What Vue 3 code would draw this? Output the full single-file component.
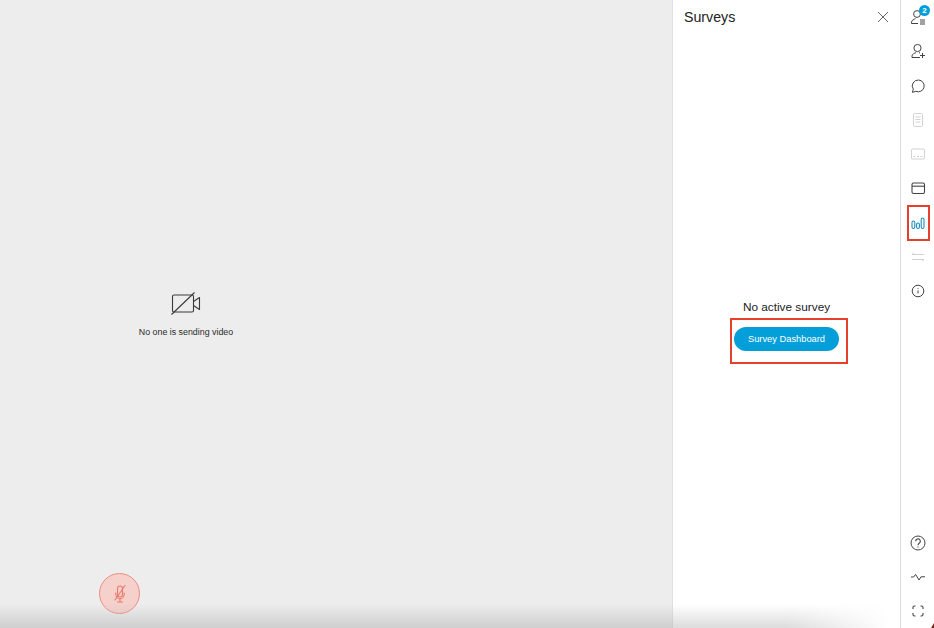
<script setup>
const topItems = [
  { id: 'participants', badge: 2 },
  { id: 'invite' },
  { id: 'chat' },
  { id: 'notes', dim: true },
  { id: 'captions', dim: true },
  { id: 'files' },
  { id: 'surveys', active: true },
  { id: 'transfer', dim: true },
  { id: 'info' }
]
const bottomItems = [{ id: 'help' }, { id: 'stats' }, { id: 'fullscreen' }]
</script>

<template>
  <div class="app">
    <main class="stage">
      <div class="video-area">
        <div class="placeholder">
          <svg class="cam" width="32" height="24" viewBox="0 0 32 24" fill="none" stroke="#3a3a3a" stroke-width="1.1">
            <rect x="1.5" y="3" width="21" height="17" rx="1.5" />
            <path d="M22.5 9.5 L28.5 5.5 V17.5 L22.5 13.5" stroke-linejoin="round" />
            <path d="M0.5 22.5 L23.5 0.5" />
          </svg>
          <span class="no-video">No one is sending video</span>
        </div>
      </div>
      <button class="mute" aria-label="Unmute">
        <svg width="14" height="20" viewBox="0 0 14 20" fill="none" stroke="#e9796b" stroke-width="1.1" stroke-linecap="round">
          <rect x="4.5" y="2" width="5" height="11" rx="2.5" />
          <path d="M2.8 9 V10.5 A4.2 4.2 0 0 0 11.2 10.5 V9" />
          <path d="M7 14.7 V18 M4.5 18 H9.5" />
          <path d="M2 16 L12 1.5" />
        </svg>
      </button>
    </main>

    <aside class="panel">
      <header class="panel-head">
        <h2 class="panel-title">Surveys</h2>
        <svg class="close" width="12" height="12" viewBox="0 0 12 12" stroke="#666" stroke-width="1" fill="none">
          <path d="M1 1 L11 11 M11 1 L1 11" />
        </svg>
      </header>
      <div class="panel-body">
        <p class="empty">No active survey</p>
        <div class="highlight-box">
          <button class="dash-btn">Survey Dashboard</button>
        </div>
      </div>
    </aside>

    <nav class="rail">
      <div class="rail-group">
        <div v-for="item in topItems" :key="item.id" class="rail-item" :class="{ dim: item.dim, active: item.active }">
          <svg width="16" height="16" viewBox="0 0 16 16" fill="none" stroke="currentColor" stroke-width="1">
            <template v-if="item.id === 'participants'">
              <circle cx="7" cy="5" r="3.4" />
              <path d="M1.5 14.5 V13.2 C1.5 11.4 3.8 10.4 5.5 9.6 M1.5 14.5 H8" />
              <path d="M10 11 H15 M10 13 H15 M10 15 H15" stroke-width="1" />
            </template>
            <template v-else-if="item.id === 'invite'">
              <circle cx="7.5" cy="5" r="3.6" />
              <path d="M2 14.5 V13 C2 11.2 4 10.4 6 9.6 M9 9.6 L10 10 M2 14.5 H10 M12.5 10 V15 M10 12.5 H15" />
            </template>
            <template v-else-if="item.id === 'chat'">
              <path d="M8.5 2 A6 5.9 0 1 1 5.8 13.3 L2.4 14.4 L3.3 11.2 A6 5.9 0 0 1 8.5 2 Z" stroke-linejoin="round" />
            </template>
            <template v-else-if="item.id === 'notes'">
              <rect x="3.5" y="1.5" width="9" height="13" rx="1" />
              <path d="M5.5 5 H10.5 M5.5 7.5 H10.5 M5.5 10 H10.5" />
            </template>
            <template v-else-if="item.id === 'captions'">
              <rect x="1.5" y="3" width="13" height="10" rx="1" />
              <path d="M3.5 10.5 H5.5 M7 10.5 H9 M10.5 10.5 H12.5" />
            </template>
            <template v-else-if="item.id === 'files'">
              <rect x="2" y="3" width="12.5" height="10.5" rx="1.5" stroke-width="1.1" />
              <path d="M2 6.2 H14.5" stroke-width="1.1" />
            </template>
            <template v-else-if="item.id === 'surveys'">
              <g stroke="#1d8fbd" stroke-width="1.1">
                <rect x="2" y="6" width="2.8" height="7.5" rx="1.4" />
                <rect x="6.6" y="8" width="2.8" height="5.5" rx="1.4" />
                <rect x="11.2" y="3" width="2.8" height="10.5" rx="1.4" />
              </g>
            </template>
            <template v-else-if="item.id === 'transfer'">
              <path d="M2 5.5 H14 M2 5.5 L4 3.8 M2 10.5 H14 M14 10.5 L12 12.2" />
            </template>
            <template v-else-if="item.id === 'info'">
              <circle cx="8" cy="8" r="5.8" />
              <path d="M8 7.4 V10.4 M8 5.2 V6" />
            </template>
          </svg>
          <span v-if="item.badge" class="badge">{{ item.badge }}</span>
        </div>
      </div>
      <div class="rail-group bottom">
        <div v-for="item in bottomItems" :key="item.id" class="rail-item">
          <svg width="16" height="16" viewBox="0 0 16 16" fill="none" stroke="currentColor" stroke-width="1">
            <template v-if="item.id === 'help'">
              <circle cx="8" cy="8" r="7" />
              <path d="M5.7 6.2 A2.3 2.3 0 1 1 9.4 8 C8.4 8.6 8 9 8 10.2 M8 11.4 V12.4" stroke-width="1.1" />
            </template>
            <template v-else-if="item.id === 'stats'">
              <path d="M1 8 H3.6 L5.6 5.4 L9 11 L11 7.8 H15" stroke-linejoin="round" />
            </template>
            <template v-else>
              <path d="M3 6 V4.5 A1.5 1.5 0 0 1 4.5 3 H5.5 M10.5 3 H11.5 A1.5 1.5 0 0 1 13 4.5 V6 M13 10 V11.5 A1.5 1.5 0 0 1 11.5 13 H10.5 M5.5 13 H4.5 A1.5 1.5 0 0 1 3 11.5 V10" stroke-width="1.1" />
            </template>
          </svg>
        </div>
      </div>
    </nav>

    <div class="bottom-fade"></div>
    <div class="panel-fade"></div>
    <div class="corner"></div>
  </div>
</template>

<style>
html, body { margin: 0; background: #fff; overflow: hidden; }
</style>

<style scoped>
.app {
  position: relative;
  display: flex;
  width: 934px;
  height: 628px;
  overflow: hidden;
  background: #fff;
  font-family: "Liberation Sans", Arial, sans-serif;
  color: #222;
}
.stage {
  position: relative;
  flex: 0 0 672px;
  background: #ededed;
  display: flex;
}
.video-area {
  flex: 0 0 372px;
  display: flex;
  align-items: center;
  justify-content: center;
}
.placeholder {
  display: flex;
  flex-direction: column;
  align-items: center;
  gap: 10px;
  transform: translateY(1px);
}
.cam { display: block; margin-left: 1px; }
.no-video { font-size: 8.85px; line-height: 12px; color: #2b2b2b; }
.mute {
  position: absolute;
  left: 99px;
  top: 573px;
  width: 41px;
  height: 41px;
  padding: 0;
  box-sizing: border-box;
  border: 1.5px solid #ee8c80;
  border-radius: 50%;
  background: #f6d0ca;
  display: flex;
  align-items: center;
  justify-content: center;
}
.panel {
  flex: 0 0 229px;
  box-sizing: border-box;
  border-left: 1px solid #e0e0e0;
  border-right: 1px solid #dcdcdc;
  display: flex;
  flex-direction: column;
  background: #fff;
}
.panel-head {
  height: 34px;
  padding: 0 11px 0 11px;
  display: flex;
  align-items: center;
  justify-content: space-between;
}
.panel-title { margin: 0; font-size: 14.2px; font-weight: 400; color: #222; }
.close { display: block; }
.panel-body {
  flex: 1;
  display: flex;
  flex-direction: column;
  align-items: center;
  padding-top: 266px;
}
.empty { margin: 0; font-size: 11.8px; line-height: 14px; color: #222; }
.highlight-box {
  margin: 4px 0 0 5px;
  box-sizing: border-box;
  width: 118px;
  height: 46px;
  padding: 7px 0 0 2px;
  border: 2px solid #e5402c;
  display: flex;
  align-items: flex-start;
  justify-content: flex-start;
}
.dash-btn {
  width: 105px;
  height: 24px;
  padding: 0;
  border: 0;
  border-radius: 12px;
  background: #049fd9;
  color: #fff;
  font-family: inherit;
  font-size: 9.3px;
}
.rail {
  flex: 1;
  display: flex;
  flex-direction: column;
  justify-content: space-between;
}
.rail-group { display: flex; flex-direction: column; }
.rail-item {
  position: relative;
  height: 34.25px;
  display: flex;
  align-items: center;
  justify-content: center;
  color: #444;
}
.rail-group.bottom .rail-item { height: 34px; }
.rail-item svg { display: block; }
.rail-item.dim { color: #d2d2d2; }
.rail-item.active::after {
  content: "";
  position: absolute;
  left: 6px;
  top: -1px;
  width: 23px;
  height: 36px;
  box-sizing: border-box;
  border: 2px solid #e5402c;
}
.badge {
  position: absolute;
  left: 18px;
  top: 5px;
  width: 11px;
  height: 11px;
  border-radius: 50%;
  background: #049fd9;
  color: #fff;
  font-size: 8px;
  font-weight: 700;
  line-height: 11px;
  text-align: center;
}
.bottom-fade {
  position: absolute;
  left: 0;
  top: 604px;
  width: 673px;
  height: 24px;
  background: linear-gradient(to bottom, rgba(190,190,190,0), rgba(190,190,190,0.65));
  pointer-events: none;
}
.panel-fade {
  position: absolute;
  left: 673px;
  top: 604px;
  width: 227px;
  height: 24px;
  background: linear-gradient(to bottom, rgba(205,205,205,0), rgba(205,205,205,0.7));
  -webkit-mask-image: linear-gradient(to right, #000 50%, transparent 95%);
  mask-image: linear-gradient(to right, #000 50%, transparent 95%);
  pointer-events: none;
}
.corner {
  position: absolute;
  right: 0;
  bottom: 0;
  width: 0;
  height: 0;
  border-left: 3px solid transparent;
  border-bottom: 5px solid #7a2a20;
}
</style>
